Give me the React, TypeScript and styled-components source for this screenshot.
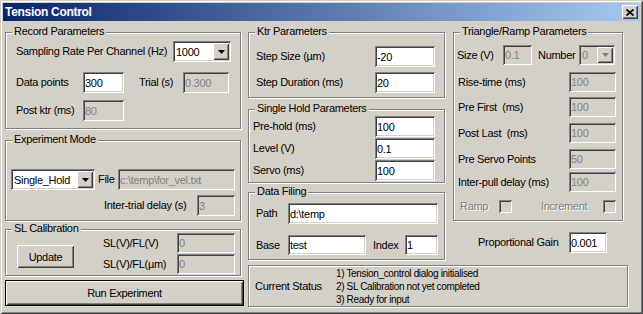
import React from "react";
import styled, { createGlobalStyle, css } from "styled-components";

const Global = createGlobalStyle`
  html, body { margin: 0; padding: 0; background: #D4D0C8; }
  body { font-family: "Liberation Sans", Arial, sans-serif; font-size: 11px; }
  *, *::before, *::after { box-sizing: border-box; }
`;

const FACE = "#D4D0C8";

const sunken = css`
  border: none;
  box-shadow: inset 1px 1px 0 #808080, inset -1px -1px 0 #fff,
    inset 2px 2px 0 #404040, inset -2px -2px 0 ${FACE};
`;

const raised = css`
  box-shadow: inset 1px 1px 0 #fff, inset -1px -1px 0 #404040,
    inset 2px 2px 0 ${FACE}, inset -2px -2px 0 #808080;
`;

const Window = styled.div`
  width: 643px;
  height: 314px;
  padding: 3px;
  background: ${FACE};
  box-shadow: inset 1px 1px 0 ${FACE}, inset -1px -1px 0 #404040,
    inset 2px 2px 0 #fff, inset -2px -2px 0 #808080;
  display: flex;
  flex-direction: column;
  font-family: "Liberation Sans", Arial, sans-serif;
  font-size: 11px;
  letter-spacing: -0.3px;
  color: #000;
  overflow: hidden;
`;

const TitleBar = styled.div`
  flex: none;
  height: 18px;
  display: flex;
  align-items: center;
  padding-left: 2px;
  padding-right: 2px;
  background: linear-gradient(to right, #0a246a, #a6caf0);
`;

const TitleText = styled.span`
  flex: 1;
  color: #fff;
  font-weight: bold;
  font-size: 12px;
  letter-spacing: -0.3px;
  line-height: 14px;
`;

const CloseButton = styled.span`
  flex: none;
  width: 16px;
  height: 14px;
  background: ${FACE};
  ${raised};
  display: flex;
  align-items: center;
  justify-content: center;
`;

const Content = styled.div`
  flex: 1;
  display: flex;
  padding: 11px 0 0 2px;
`;

const Column = styled.div<{ $w: number; $ml?: number }>`
  flex: none;
  width: ${(p) => p.$w}px;
  margin-left: ${(p) => p.$ml ?? 0}px;
  display: flex;
  flex-direction: column;
`;

const TopRow = styled.div`
  display: flex;
`;

const Group = styled.div<{ $w: number; $h: number; $mt?: number; $pl?: number }>`
  position: relative;
  flex: none;
  width: ${(p) => p.$w}px;
  height: ${(p) => p.$h}px;
  margin-top: ${(p) => p.$mt ?? 0}px;
  padding-left: ${(p) => p.$pl ?? 0}px;
  border: 1px solid #808080;
  box-shadow: inset 1px 1px 0 #fff, 1px 1px 0 #fff;
`;

const GroupTitle = styled.span`
  position: absolute;
  top: -8px;
  left: 6px;
  padding: 0 2px;
  background: ${FACE};
  line-height: 13px;
  white-space: pre;
`;

const Row = styled.div<{ $mt?: number; $h?: number }>`
  display: flex;
  align-items: center;
  margin-top: ${(p) => p.$mt ?? 0}px;
  height: ${(p) => p.$h ?? 20}px;
`;

const Label = styled.span<{ $w?: number; $ml?: number; $pl?: number; $disabled?: boolean }>`
  flex: none;
  width: ${(p) => (p.$w ? `${p.$w}px` : "auto")};
  margin-left: ${(p) => p.$ml ?? 0}px;
  padding-left: ${(p) => p.$pl ?? 0}px;
  white-space: pre;
  line-height: 13px;
  color: ${(p) => (p.$disabled ? "#808080" : "#000")};
  text-shadow: ${(p) => (p.$disabled ? "1px 1px 0 #fff" : "none")};
`;

const Field = styled.input<{ $w: number }>`
  ${sunken};
  flex: none;
  width: ${(p) => p.$w}px;
  height: 100%;
  margin: 0;
  padding: 0 2px;
  font: inherit;
  letter-spacing: inherit;
  color: #000;
  background: #fff;
  outline: none;
  &:disabled {
    background: ${FACE};
    color: #808080;
  }
`;

const Combo = styled.div<{ $w: number; $disabled?: boolean }>`
  ${sunken};
  flex: none;
  width: ${(p) => p.$w}px;
  height: 100%;
  padding: 2px;
  display: flex;
  align-items: stretch;
  background: ${(p) => (p.$disabled ? FACE : "#fff")};
  color: ${(p) => (p.$disabled ? "#808080" : "#000")};
`;

const ComboText = styled.span`
  flex: 1;
  display: flex;
  align-items: center;
  padding-left: 1px;
  white-space: pre;
  overflow: hidden;
`;

const ComboButton = styled.span`
  flex: none;
  width: 16px;
  background: ${FACE};
  ${raised};
  display: flex;
  align-items: center;
  justify-content: center;
`;

const Check = styled.span`
  flex: none;
  width: 13px;
  height: 13px;
  ${sunken};
  background: ${FACE};
`;

const Button = styled.button<{ $w: number; $h: number; $ml?: number; $mt?: number; $default?: boolean }>`
  flex: none;
  width: ${(p) => p.$w}px;
  height: ${(p) => p.$h}px;
  margin: ${(p) => p.$mt ?? 0}px 0 0 ${(p) => p.$ml ?? 0}px;
  padding: 0;
  background: ${FACE};
  font: inherit;
  letter-spacing: inherit;
  color: #000;
  border: ${(p) => (p.$default ? "1px solid #000" : "none")};
  ${raised};
`;

const SubColumn = styled.div<{ $ml?: number }>`
  display: flex;
  flex-direction: column;
  margin-left: ${(p) => p.$ml ?? 0}px;
`;

const StatusRow = styled.div`
  display: flex;
  align-items: center;
  height: 100%;
  padding-left: 6px;
`;

const StatusLines = styled.div`
  display: flex;
  flex-direction: column;
  font-size: 10px;
  letter-spacing: -0.35px;
  line-height: 13px;
`;

const Arrow: React.FC<{ color?: string }> = ({ color = "#000" }) => (
  <svg width="7" height="4" viewBox="0 0 7 4">
    <polygon points="0,0 7,0 3.5,4" fill={color} />
  </svg>
);

const CloseIcon = () => (
  <svg width="8" height="7" viewBox="0 0 8 7">
    <path d="M0.5 0.5 L7.5 6.5 M7.5 0.5 L0.5 6.5" stroke="#000" strokeWidth="1.7" />
  </svg>
);

const ComboBox: React.FC<{ w: number; value: string; disabled?: boolean }> = ({ w, value, disabled }) => (
  <Combo $w={w} $disabled={disabled}>
    <ComboText>{value}</ComboText>
    <ComboButton>
      <Arrow color={disabled ? "#808080" : "#000"} />
    </ComboButton>
  </Combo>
);

export default function App() {
  return (
    <>
      <Global />
      <Window>
        <TitleBar>
          <TitleText>Tension Control</TitleText>
          <CloseButton>
            <CloseIcon />
          </CloseButton>
        </TitleBar>
        <Content>
          <Column $w={239}>
            <Group $w={236} $h={97} $pl={10}>
              <GroupTitle>Record Parameters</GroupTitle>
              <Row $mt={8} $h={21}>
                <Label $w={157}>Sampling Rate Per Channel (Hz)</Label>
                <ComboBox w={58} value="1000" />
              </Row>
              <Row $mt={10} $h={21}>
                <Label $w={67}>Data points</Label>
                <Field $w={41} defaultValue="300" />
                <Label $w={44} $ml={15}>Trial (s)</Label>
                <Field $w={46} defaultValue="0.300" disabled />
              </Row>
              <Row $mt={7} $h={21}>
                <Label $w={67}>Post ktr (ms)</Label>
                <Field $w={41} defaultValue="80" disabled />
              </Row>
            </Group>
            <Group $w={236} $h={81} $mt={11} $pl={5}>
              <GroupTitle>Experiment Mode</GroupTitle>
              <Row $mt={28} $h={21}>
                <ComboBox w={84} value="Single_Hold" />
                <Label $w={20} $ml={3}>File</Label>
                <Field $w={117} defaultValue="c:\temp\for_vel.txt" disabled />
              </Row>
              <Row $mt={5} $h={21}>
                <Label $w={93} $ml={93}>Inter-trial delay (s)</Label>
                <Field $w={38} defaultValue="3" disabled />
              </Row>
            </Group>
            <Group $w={236} $h={47} $mt={8}>
              <GroupTitle>SL Calibration</GroupTitle>
              <TopRow>
                <Button $w={57} $h={23} $ml={11} $mt={15}>Update</Button>
                <SubColumn $ml={29}>
                  <Row $mt={3} $h={20}>
                    <Label $w={74}>SL(V)/FL(V)</Label>
                    <Field $w={58} defaultValue="0" disabled />
                  </Row>
                  <Row $mt={1} $h={20}>
                    <Label $w={74}>SL(V)/FL(µm)</Label>
                    <Field $w={58} defaultValue="0" disabled />
                  </Row>
                </SubColumn>
              </TopRow>
            </Group>
            <Button $w={239} $h={26} $mt={4} $default>Run Experiment</Button>
          </Column>

          <Column $w={380} $ml={4}>
            <TopRow>
              <Column $w={197}>
                <Group $w={197} $h={66} $pl={7}>
                  <GroupTitle>Ktr Parameters</GroupTitle>
                  <Row $mt={13} $h={21}>
                    <Label $w={119}>Step Size (µm)</Label>
                    <Field $w={60} defaultValue="-20" />
                  </Row>
                  <Row $mt={5} $h={21}>
                    <Label $w={119}>Step Duration (ms)</Label>
                    <Field $w={60} defaultValue="20" />
                  </Row>
                </Group>
                <Group $w={197} $h={74} $mt={11} $pl={4}>
                  <GroupTitle>Single Hold Parameters</GroupTitle>
                  <Row $mt={6} $h={21}>
                    <Label $w={122}>Pre-hold (ms)</Label>
                    <Field $w={60} defaultValue="100" />
                  </Row>
                  <Row $mt={1} $h={21}>
                    <Label $w={122}>Level (V)</Label>
                    <Field $w={60} defaultValue="0.1" />
                  </Row>
                  <Row $mt={1} $h={21}>
                    <Label $w={122}>Servo (ms)</Label>
                    <Field $w={60} defaultValue="100" />
                  </Row>
                </Group>
                <Group $w={197} $h={68} $mt={9} $pl={7}>
                  <GroupTitle>Data Filing</GroupTitle>
                  <Row $mt={10} $h={21}>
                    <Label $w={32}>Path</Label>
                    <Field $w={150} defaultValue="d:\temp" />
                  </Row>
                  <Row $mt={11} $h={20}>
                    <Label $w={32}>Base</Label>
                    <Field $w={78} defaultValue="test" />
                    <Label $w={32} $ml={7}>Index</Label>
                    <Field $w={33} defaultValue="1" />
                  </Row>
                </Group>
              </Column>

              <Column $w={170} $ml={8}>
                <Group $w={170} $h={189} $pl={3}>
                  <GroupTitle>Triangle/Ramp Parameters</GroupTitle>
                  <Row $mt={12} $h={20}>
                    <Label $w={46}>Size (V)</Label>
                    <Field $w={29} defaultValue="0.1" disabled />
                    <Label $w={41} $ml={6}>Number</Label>
                    <ComboBox w={36} value="0" disabled />
                  </Row>
                  <Row $mt={7} $h={20}>
                    <Label $w={112} $pl={1}>Rise-time (ms)</Label>
                    <Field $w={47} defaultValue="100" disabled />
                  </Row>
                  <Row $mt={5} $h={20}>
                    <Label $w={112} $pl={1}>Pre First  (ms)</Label>
                    <Field $w={47} defaultValue="100" disabled />
                  </Row>
                  <Row $mt={6} $h={20}>
                    <Label $w={112} $pl={1}>Post Last  (ms)</Label>
                    <Field $w={47} defaultValue="100" disabled />
                  </Row>
                  <Row $mt={6} $h={20}>
                    <Label $w={112} $pl={1}>Pre Servo Points</Label>
                    <Field $w={47} defaultValue="50" disabled />
                  </Row>
                  <Row $mt={3} $h={20}>
                    <Label $w={112} $pl={1}>Inter-pull delay (ms)</Label>
                    <Field $w={47} defaultValue="100" disabled />
                  </Row>
                  <Row $mt={8} $h={13}>
                    <Label $w={39} $ml={3} $disabled>Ramp</Label>
                    <Check />
                    <Label $w={62} $ml={29} $disabled>Increment</Label>
                    <Check />
                  </Row>
                </Group>
                <Row $mt={11} $h={21}>
                  <Label $w={91} $ml={25}>Proportional Gain</Label>
                  <Field $w={38} defaultValue="0.001" />
                </Row>
              </Column>
            </TopRow>
            <Group $w={380} $h={42} $mt={5}>
              <StatusRow>
                <Label $w={81}>Current Status</Label>
                <StatusLines>
                  <span>1) Tension_control dialog initialised</span>
                  <span>2) SL Calibration not yet completed</span>
                  <span>3) Ready for input</span>
                </StatusLines>
              </StatusRow>
            </Group>
          </Column>
        </Content>
      </Window>
    </>
  );
}
